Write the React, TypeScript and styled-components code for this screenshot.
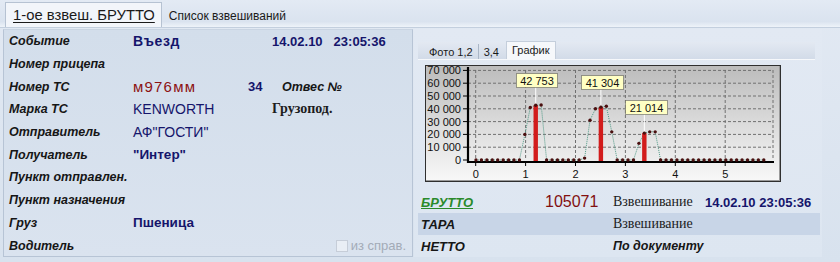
import React from 'react';
import styled, { createGlobalStyle, css } from 'styled-components';

const GlobalStyle = createGlobalStyle`
  html, body { margin: 0; padding: 0; }
  body {
    background: #dde6f1;
    font-family: "Liberation Sans", Arial, sans-serif;
  }
`;

const NAVY = '#15156b';

// chart data: one value every 5.43px, bars where the weight was taken
const points = [
  0, 0, 0, 0, 0, 0, 0, 0, 0, 20000, 41000, 42753, 43000,
  0, 0, 0, 0, 0, 0, 0, 1500, 31000, 40000, 41304, 42000, 22000,
  0, 0, 0, 0, 13000, 21014, 22000, 22000,
  0, 0, 0, 0, 0, 0, 0, 0, 0, 0, 0, 0, 0, 0, 0, 0, 0, 0, 0, 0,
];
const bars = [
  { i: 11, label: '42 753', bx: 90, by: 7, bw: 41 },
  { i: 23, label: '41 304', bx: 155, by: 9, bw: 42 },
  { i: 31, label: '21 014', bx: 199, by: 34, bw: 42 },
];

const px = (i: number) => 50 + i * 5.43;
const py = (v: number) => 94 - v * 0.00128;
const ux = (k: number) => 49.7 + k * 49.9;
const fmt = (v: number) => (v === 0 ? '0' : `${v / 1000} 000`);

const WeightChart = () => {
  const line = points.map((v, i) => `${px(i).toFixed(1)},${py(v).toFixed(1)}`).join(' ');
  const ticks = [0, 10000, 20000, 30000, 40000, 50000, 60000, 70000];
  return (
    <svg width="354" height="115" viewBox="0 0 354 115">
      <g stroke="#707070" strokeWidth="1" strokeDasharray="3 2" fill="none">
        {ticks.slice(1).map((v) => (
          <line key={v} x1="42" x2="347" y1={py(v)} y2={py(v)} />
        ))}
        {[0, 1, 2, 3, 4, 5].map((k) => (
          <line key={k} x1={ux(k)} x2={ux(k)} y1="4" y2="94" />
        ))}
        <line x1="347" x2="347" y1="4" y2="94" />
      </g>
      <polyline points={line} fill="none" stroke="#4f9a86" strokeWidth="1" strokeDasharray="1 1" />
      {bars.map((b) => (
        <rect key={b.i} x={px(b.i) - 2.2} y={py(points[b.i])} width="4.4" height={95 - py(points[b.i])} fill="#d21c1c" />
      ))}
      <g stroke="#000" strokeWidth="1">
        {ticks.map((v) => (
          <line key={v} x1="37" x2="41" y1={py(v)} y2={py(v)} />
        ))}
        {[0, 1, 2, 3, 4, 5].map((k) => (
          <line key={k} x1={ux(k)} x2={ux(k)} y1="97" y2="100" />
        ))}
      </g>
      <line x1="42" x2="42" y1="1" y2="97" stroke="#000" strokeWidth="2.2" />
      <line x1="41" x2="348" y1="96" y2="96" stroke="#000" strokeWidth="2.2" />
      {points.map((v, i) => (
        <circle key={i} cx={px(i)} cy={py(v)} r="1.7" fill="#4a0f0f" />
      ))}
      {bars.map((b) => (
        <g key={b.label}>
          <line x1={px(b.i)} x2={px(b.i)} y1={b.by + 14} y2={py(points[b.i]) - 2} stroke="#ffffff" strokeWidth="1" />
          <rect x={b.bx + 0.5} y={b.by + 0.5} width={b.bw} height="14" fill="#ffffc4" stroke="#444" strokeDasharray="1 1" />
          <text x={b.bx + b.bw / 2 + 0.5} y={b.by + 11.5} fontSize="11" textAnchor="middle" fill="#111" fontFamily="Liberation Sans, Arial, sans-serif">
            {b.label}
          </text>
        </g>
      ))}
      <g fontSize="11" fill="#111" fontFamily="Liberation Sans, Arial, sans-serif">
        {ticks.map((v) => (
          <text key={v} x="35" y={py(v) + 4} textAnchor="end">
            {fmt(v)}
          </text>
        ))}
        {[0, 1, 2, 3, 4, 5].map((k) => (
          <text key={k} x={ux(k)} y="112" textAnchor="middle">
            {k}
          </text>
        ))}
      </g>
    </svg>
  );
};

const Root = styled.div`
  width: 840px;
  height: 262px;
  overflow: hidden;
  display: flex;
  flex-direction: column;
  background: linear-gradient(180deg, #e2e9f3 0%, #d8e2ee 100%);
`;

const TopBar = styled.div`
  height: 28px;
  box-sizing: border-box;
  display: flex;
  align-items: flex-end;
  padding-left: 5px;
  border-bottom: 1px solid #c3cfde;
  background: linear-gradient(180deg, #e3eaf4 0%, #dae3ef 80%, #eef3f9 100%);
`;

const MainTab = styled.div<{ $active?: boolean }>`
  height: 25px;
  box-sizing: border-box;
  display: flex;
  align-items: center;
  padding: 0 6px 0 7px;
  color: #1a1a1a;
  ${({ $active }) =>
    $active
      ? css`
          font-size: 14.8px;
          text-decoration: underline;
          text-underline-offset: 2px;
          background: #f2f5fa;
          border: 1px solid #b6c2d2;
          border-bottom: none;
        `
      : css`
          font-size: 12px;
          padding-top: 2px;
        `}
`;

const Body = styled.div`
  display: flex;
  padding: 1px 0 0 3px;
  gap: 1px;
  height: 228px;
`;

const LeftPanel = styled.div`
  width: 410px;
  box-sizing: border-box;
  border: 1px solid #b7c4d5;
  border-top-color: #c9d4e2;
  background: linear-gradient(180deg, #d3deeb 0%, #dae3ef 100%);
  padding-left: 5px;
`;

const Row = styled.div`
  height: 22.7px;
  display: flex;
  align-items: center;
`;

const Label = styled.div<{ $w?: number }>`
  width: ${({ $w }) => ($w ? `${$w}px` : 'auto')};
  flex: none;
  font-size: 12.5px;
  font-weight: bold;
  font-style: italic;
  color: #161616;
  white-space: nowrap;
`;

const Value = styled.div<{ $w?: number; $bold?: boolean; $size?: number; $spacing?: number }>`
  width: ${({ $w }) => ($w ? `${$w}px` : 'auto')};
  flex: none;
  font-size: ${({ $size }) => $size || 14}px;
  font-weight: ${({ $bold }) => ($bold ? 'bold' : 'normal')};
  letter-spacing: ${({ $spacing }) => $spacing || 0}px;
  color: ${NAVY};
  white-space: nowrap;
`;

const Plate = styled.div`
  width: 115px;
  flex: none;
  font-size: 15px;
  letter-spacing: 1.2px;
  color: #8c1212;
`;

const Stamp = styled.div`
  display: flex;
  gap: 11px;
  font-size: 13px;
  font-weight: bold;
  color: ${NAVY};
`;

const SerifText = styled.div<{ $bold?: boolean; $size?: number }>`
  width: ${({ $bold }) => ($bold ? 'auto' : '92px')};
  flex: none;
  font-family: "Liberation Serif", "Times New Roman", serif;
  font-size: ${({ $size }) => $size || 14}px;
  font-weight: ${({ $bold }) => ($bold ? 'bold' : 'normal')};
  color: #1c1c1c;
`;

const Spacer = styled.div`
  flex: 1;
`;

const CheckWrap = styled.label`
  display: flex;
  align-items: center;
  gap: 3px;
  margin-right: 6px;
  font-size: 13px;
  color: #a3abb7;
`;

const Box = styled.span`
  width: 10px;
  height: 10px;
  border: 1px solid #c6cdd8;
  background: #e9eef5;
`;

const RightPanel = styled.div`
  width: 408px;
  box-sizing: border-box;
  padding-left: 4px;
  background: linear-gradient(180deg, #e2e9f3 0%, #dde6f1 100%);
  display: flex;
  flex-direction: column;
`;

const SubTabs = styled.div`
  margin-top: 13px;
  width: 397px;
  height: 18px;
  box-sizing: border-box;
  padding-left: 6px;
  display: flex;
  align-items: flex-end;
  background: linear-gradient(180deg, #e3e9f2 0%, #d2dbe8 100%);
  border-bottom: 1px solid #f6f8fb;
`;

const SubTab = styled.div<{ $active?: boolean; $last?: boolean }>`
  height: ${({ $active }) => ($active ? 18 : 15)}px;
  box-sizing: border-box;
  display: flex;
  align-items: center;
  padding: 0 5px;
  font-size: 11px;
  color: #1a1a1a;
  border-right: 1px solid ${({ $last }) => ($last ? 'transparent' : '#aab6c6')};
  ${({ $active }) =>
    $active &&
    css`
      margin-left: 1px;
      background: #f6f8fb;
      border: 1px solid #c4cedb;
      border-bottom: none;
      padding-bottom: 2px;
    `}
`;

const ChartBox = styled.div`
  margin: 5px 0 0 7px;
  width: 356px;
  height: 117px;
  box-sizing: border-box;
  border: 1px solid #2f2f2f;
  background: linear-gradient(180deg, #bcbcbc 0%, #dedede 55%, #f8f8f8 100%);
  box-shadow: inset -1px -1px 0 #9a9a9a;
`;

const Summary = styled.div`
  margin-top: 9px;
  width: 402px;
`;

const SumRow = styled.div<{ $band?: boolean }>`
  height: 22px;
  display: flex;
  align-items: center;
  padding-left: 3px;
  background: ${({ $band }) => ($band ? '#c8d5e7' : 'transparent')};
`;

const SumLabel = styled(Label)<{ $link?: boolean }>`
  width: 124px;
  font-size: 13px;
  ${({ $link }) =>
    $link &&
    css`
      color: #2a8a2a;
      text-decoration: underline;
    `}
`;

const Weight = styled.div`
  width: 68px;
  flex: none;
  font-size: 16px;
  color: #821010;
`;

const App = () => (
  <Root>
    <GlobalStyle />
    <TopBar>
      <MainTab $active>1-ое взвеш. БРУТТО</MainTab>
      <MainTab>Список взвешиваний</MainTab>
    </TopBar>
    <Body>
      <LeftPanel>
        <Row>
          <Label $w={124}>Событие</Label>
          <Value $w={139} $bold $spacing={0.6}>Въезд</Value>
          <Stamp>
            <span>14.02.10</span>
            <span>23:05:36</span>
          </Stamp>
        </Row>
        <Row>
          <Label $w={124}>Номер прицепа</Label>
        </Row>
        <Row>
          <Label $w={124}>Номер ТС</Label>
          <Plate>м976мм</Plate>
          <Value $w={34} $bold $size={13}>34</Value>
          <Label>Отвес №</Label>
        </Row>
        <Row>
          <Label $w={124}>Марка ТС</Label>
          <Value $w={139}>KENWORTH</Value>
          <SerifText $bold>Грузопод.</SerifText>
        </Row>
        <Row>
          <Label $w={124}>Отправитель</Label>
          <Value>АФ"ГОСТИ"</Value>
        </Row>
        <Row>
          <Label $w={124}>Получатель</Label>
          <Value $bold $size={13.5}>"Интер"</Value>
        </Row>
        <Row>
          <Label $w={124}>Пункт отправлен.</Label>
        </Row>
        <Row>
          <Label $w={124}>Пункт назначения</Label>
        </Row>
        <Row>
          <Label $w={124}>Груз</Label>
          <Value $bold $size={13.5}>Пшеница</Value>
        </Row>
        <Row>
          <Label $w={124}>Водитель</Label>
          <Spacer />
          <CheckWrap>
            <Box />
            из справ.
          </CheckWrap>
        </Row>
      </LeftPanel>
      <RightPanel>
        <SubTabs>
          <SubTab>Фото 1,2</SubTab>
          <SubTab $last>3,4</SubTab>
          <SubTab $active>График</SubTab>
        </SubTabs>
        <ChartBox>
          <WeightChart />
        </ChartBox>
        <Summary>
          <SumRow>
            <SumLabel $link>БРУТТО</SumLabel>
            <Weight>105071</Weight>
            <SerifText>Взвешивание</SerifText>
            <Stamp>14.02.10 23:05:36</Stamp>
          </SumRow>
          <SumRow $band>
            <SumLabel>ТАРА</SumLabel>
            <Weight />
            <SerifText>Взвешивание</SerifText>
          </SumRow>
          <SumRow>
            <SumLabel>НЕТТО</SumLabel>
            <Weight />
            <Label>По документу</Label>
          </SumRow>
        </Summary>
      </RightPanel>
    </Body>
  </Root>
);

export default App;
